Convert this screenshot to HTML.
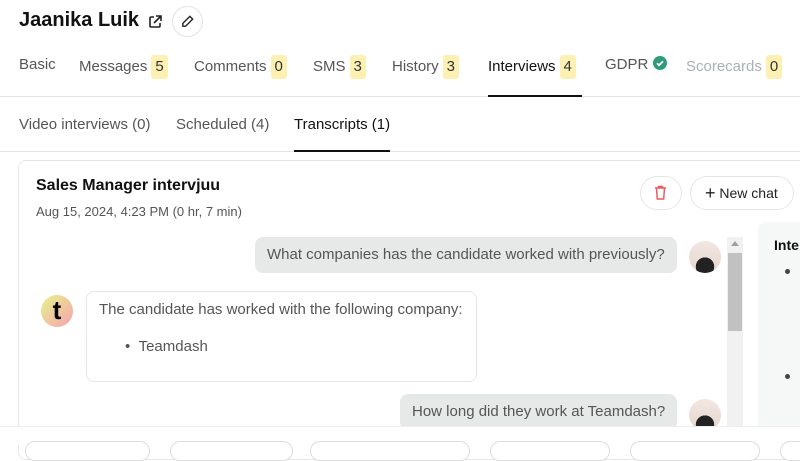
<!DOCTYPE html>
<html><head><style>
*{box-sizing:border-box;margin:0;padding:0}
body{width:800px;height:445px;overflow:hidden;background:#fff;font-family:"Liberation Sans",sans-serif;color:#111;position:relative}
.a{position:absolute;white-space:nowrap}
.badge{display:inline-block;background:#fdf0b3;border-radius:3px;padding:0 4px;height:24px;line-height:24px;font-size:15px;color:#333;margin-left:4px;vertical-align:middle}
.tab{position:absolute;top:55px;font-size:15px;color:#555}
.bub{position:absolute;background:#e7e9e8;border-radius:8px;font-size:15px;color:#555;padding:0 12px;height:36px;line-height:36px}
.av{position:absolute;width:32px;height:32px;border-radius:50%;background:radial-gradient(circle at 50% 80%,#222 0 30%,transparent 31%),linear-gradient(#f3e7e1,#e4d6cf)}
.pill{position:absolute;top:441px;height:20px;border:1px solid #ddd;border-radius:10px;background:#fff}
</style></head><body>
<div class="a" style="left:19px;top:9px;font-size:20px;font-weight:bold">Jaanika Luik</div>
<svg class="a" style="left:147px;top:14px" width="16" height="16" viewBox="0 0 16 16" fill="none" stroke="#222" stroke-width="1.6"><path d="M7 3H4a1 1 0 0 0-1 1v8a1 1 0 0 0 1 1h8a1 1 0 0 0 1-1V9"/><path d="M9 2h5v5M14 2L7 9"/></svg>
<div class="a" style="left:172px;top:6px;width:31px;height:31px;border:1px solid #e3e3e3;border-radius:50%"></div>
<svg class="a" style="left:180px;top:14px" width="15" height="15" viewBox="0 0 16 16" fill="none" stroke="#222" stroke-width="1.5"><path d="M10.5 2.5l3 3L6 13H3v-3z"/></svg>

<div class="tab" style="left:19px;top:56px">Basic</div>
<div class="tab" style="left:79px">Messages<span class="badge">5</span></div>
<div class="tab" style="left:194px">Comments<span class="badge">0</span></div>
<div class="tab" style="left:313px">SMS<span class="badge">3</span></div>
<div class="tab" style="left:392px">History<span class="badge">3</span></div>
<div class="tab" style="left:488px;color:#111">Interviews<span class="badge">4</span></div>
<div class="tab" style="left:605px;top:56px">GDPR <svg width="14" height="14" viewBox="0 0 14 14" style="vertical-align:-1px"><circle cx="7" cy="7" r="7" fill="#2e9b7b"/><path d="M4 7.2l2 2 4-4" stroke="#fff" stroke-width="1.8" fill="none"/></svg></div>
<div class="tab" style="left:686px;color:#a9b0b8">Scorecards<span class="badge">0</span></div>
<div class="a" style="left:0;top:96px;width:800px;height:1px;background:#e4e7ea"></div>
<div class="a" style="left:488px;top:95px;width:94px;height:2px;background:#111"></div>

<div class="a" style="left:19px;top:116px;font-size:15px;color:#555">Video interviews (0)</div>
<div class="a" style="left:176px;top:116px;font-size:15px;color:#555">Scheduled (4)</div>
<div class="a" style="left:294px;top:116px;font-size:15px;color:#111">Transcripts (1)</div>
<div class="a" style="left:0;top:151px;width:800px;height:1px;background:#e4e7ea"></div>
<div class="a" style="left:294px;top:150px;width:96px;height:2px;background:#111"></div>

<div class="a" style="left:18px;top:160px;width:800px;height:300px;border:1px solid #e6e6e6;border-radius:8px"></div>
<div class="a" style="left:36px;top:177px;font-size:16px;font-weight:bold">Sales Manager intervjuu</div>
<div class="a" style="left:36px;top:204px;font-size:13px;color:#555">Aug 15, 2024, 4:23 PM (0 hr, 7 min)</div>
<div class="a" style="left:640px;top:176px;width:42px;height:34px;border:1px solid #e6e6e6;border-radius:17px"></div>
<svg class="a" style="left:653px;top:185px" width="15" height="16" viewBox="0 0 15 16" fill="none" stroke="#ef5a5a" stroke-width="1.5"><path d="M2 3h11M5.5 3V1.5h4V3M3.5 3l.8 11h6.4l.8-11"/></svg>
<div class="a" style="left:690px;top:176px;width:104px;height:34px;border:1px solid #e6e6e6;border-radius:17px;font-size:14px;line-height:32px;padding-left:14px;color:#222"><span style="font-size:18px;vertical-align:-1px">+</span> New chat</div>

<div class="bub" style="left:255px;top:237px">What companies has the candidate worked with previously?</div>
<div class="av" style="left:689px;top:241px"></div>
<div class="a" style="left:41px;top:295px;width:32px;height:32px;border-radius:50%;background:linear-gradient(135deg,#e6f58a,#f7a0b0);font-weight:bold;font-size:26px;line-height:30px;text-align:center;color:#000">t</div>
<div class="a" style="left:86px;top:291px;width:391px;height:91px;border:1px solid #e6e6e6;border-radius:8px"></div>
<div class="a" style="left:99px;top:301px;font-size:15px;color:#555">The candidate has worked with the following company:</div>
<div class="a" style="left:125px;top:338px;font-size:15px;color:#555">•&nbsp;&nbsp;Teamdash</div>
<div class="bub" style="left:400px;top:394px">How long did they work at Teamdash?</div>
<div class="av" style="left:689px;top:399px"></div>

<div class="a" style="left:727px;top:237px;width:16px;height:190px;background:#f1f1f1"></div>
<div class="a" style="left:728px;top:253px;width:14px;height:78px;background:#c1c1c1"></div>
<div class="a" style="left:731px;top:241px;width:0;height:0;border:4px solid transparent;border-bottom:5px solid #a0a0a0;border-top:0"></div>

<div class="a" style="left:758px;top:222px;width:60px;height:210px;background:#f6f7f7;border-radius:8px"></div>
<div class="a" style="left:774px;top:237px;font-size:14px;font-weight:bold">Inte</div>
<div class="a" style="left:785px;top:269px;width:5px;height:5px;border-radius:50%;background:#444"></div>
<div class="a" style="left:785px;top:374px;width:5px;height:5px;border-radius:50%;background:#444"></div>

<div class="a" style="left:0;top:426px;width:800px;height:19px;background:#fff;border-top:1px solid #eee"></div>
<div class="pill" style="left:25px;width:125px"></div>
<div class="pill" style="left:170px;width:123px"></div>
<div class="pill" style="left:310px;width:160px"></div>
<div class="pill" style="left:490px;width:120px"></div>
<div class="pill" style="left:630px;width:130px"></div>
<div class="pill" style="left:780px;width:60px"></div>
</body></html>
